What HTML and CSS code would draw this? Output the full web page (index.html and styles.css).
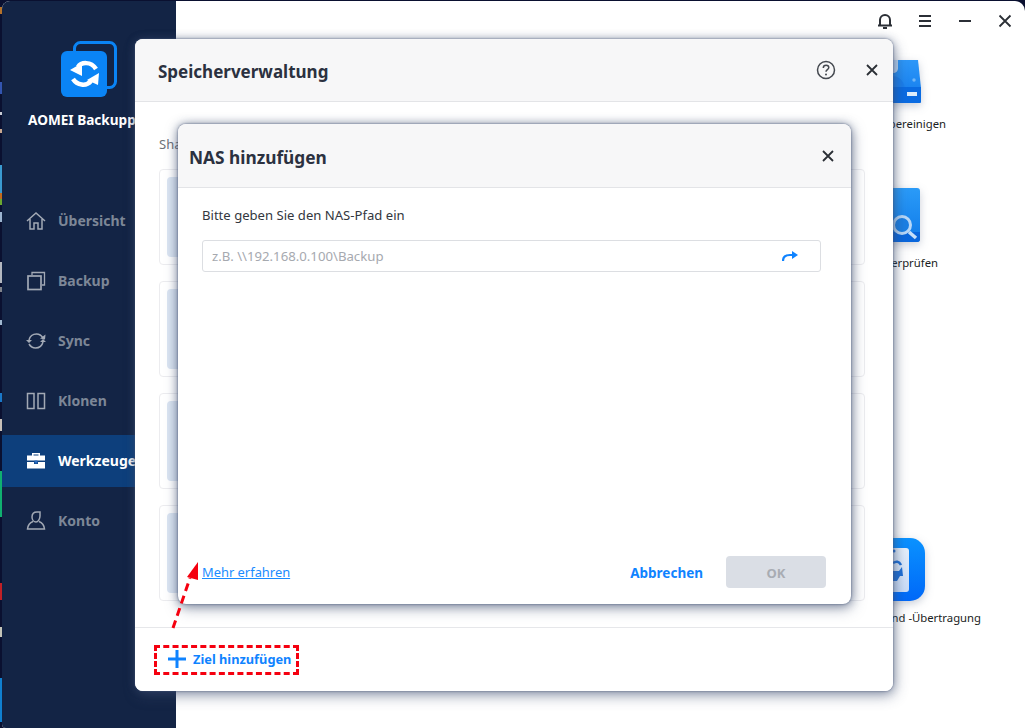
FILE: index.html
```html
<!DOCTYPE html>
<html lang="de">
<head>
<meta charset="utf-8">
<title>AOMEI Backupper</title>
<link rel="stylesheet" href="styles.css">
</head>
<body>
<div class="desk-strip"></div>
<div class="app">
  <aside class="sidebar">
    <svg class="logo" width="56" height="56" viewBox="0 0 56 56">
      <rect x="13.5" y="1.5" width="41" height="45" rx="6" fill="none" stroke="#0a84f5" stroke-width="3"/>
      <rect x="0" y="10" width="46" height="46" rx="6" fill="#0a84f5"/>
      <path d="M17 26C20 21 30 20 35 28" fill="none" stroke="#fff" stroke-width="4.500"/>
      <path d="M9 29 21 22 21 35z" fill="#fff"/>
      <path d="M12 38C16 44 25 46 30 40" fill="none" stroke="#fff" stroke-width="4.500"/>
      <path d="M38 32 37 44 26 39z" fill="#fff"/>
    </svg>
    <div class="brand">AOMEI Backupper</div>
    <nav class="nav">
      <a class="nav-item">
        <svg width="20" height="20" viewBox="0 0 20 20"><path d="M1 10 10 2l9 8M4 8v10h4v-6h4v6h4V8" fill="none" stroke="#a2a9b5" stroke-width="1.500"/></svg>
        <span>Übersicht</span>
      </a>
      <a class="nav-item">
        <svg width="20" height="20" viewBox="0 0 20 20"><path d="M6 4V1.500h12.500V14H16" fill="none" stroke="#a2a9b5" stroke-width="1.300"/><rect x="2" y="5" width="13" height="13.500" fill="none" stroke="#a2a9b5" stroke-width="1.700"/></svg>
        <span>Backup</span>
      </a>
      <a class="nav-item">
        <svg width="20" height="20" viewBox="0 0 20 20"><path d="M3 9c1-4 4-6 7.500-6 3 0 5 1.500 6.500 4M17 11c-1 4-4 6-7.500 6-3 0-5-1.500-6.500-4" fill="none" stroke="#a2a9b5" stroke-width="1.500"/><path d="M0 9h6l-3 3zM14 7.500l5 1 .5-5zM14 11h6l-3-3z" fill="#a2a9b5"/></svg>
        <span>Sync</span>
      </a>
      <a class="nav-item">
        <svg width="20" height="20" viewBox="0 0 20 20"><path d="M1.500 2.500h6.500v15H1.500zM12 2.500h6.500v15H12z" fill="none" stroke="#a2a9b5" stroke-width="1.500"/></svg>
        <span>Klonen</span>
      </a>
      <a class="nav-item active">
        <svg width="20" height="20" viewBox="0 0 20 20"><path d="M6 4.500V2h8v2.500h5v5H1v-5z" fill="#fff"/><path d="M1 11h7v2h4v-2h7v6.500H1z" fill="#fff"/><path d="M7.500 4.500V3.500h5v1z" fill="#0d3f7c"/><rect x="8.500" y="9.500" width="3" height="3" fill="#2a6cc0"/></svg>
        <span>Werkzeuge</span>
      </a>
      <a class="nav-item">
        <svg width="20" height="20" viewBox="0 0 20 20"><path d="M6 6c0-3 2-5 5-5h3v4c0 3-2 6-4 6S6 9 6 6zM7 10.500c-3 1-5 3-5.500 7.500h17c-.5-4.500-2.500-6.500-5.500-7.500" fill="none" stroke="#a2a9b5" stroke-width="1.500"/></svg>
        <span>Konto</span>
      </a>
    </nav>
  </aside>

  <main class="main">
    <header class="titlebar">
      <button class="win-btn"><svg width="16" height="16" viewBox="0 0 16 16"><path d="M1 12.500h14M3 12V7a5 5 0 0 1 10 0v5M6 15h4" fill="none" stroke="#2b2f36" stroke-width="2"/></svg></button>
      <button class="win-btn"><svg width="14" height="14" viewBox="0 0 14 14"><path d="M1 2h12M1 7h12M1 12h12" stroke="#2b2f36" stroke-width="1.800"/></svg></button>
      <button class="win-btn"><svg width="14" height="14" viewBox="0 0 14 14"><path d="M1 7h12" stroke="#2b2f36" stroke-width="1.800"/></svg></button>
      <button class="win-btn"><svg width="14" height="14" viewBox="0 0 14 14"><path d="M1.500 1.500l11 11M12.500 1.500l-11 11" stroke="#2b2f36" stroke-width="1.800"/></svg></button>
    </header>
    <section class="tools">
      <div class="tool tool-clean">
        <svg class="tool-icon" width="60" height="44" viewBox="0 0 60 44">
          <defs><linearGradient id="diskTop" x1="0" y1="0" x2="0" y2="1"><stop offset="0" stop-color="#2d97f8"/><stop offset="1" stop-color="#1b84f0"/></linearGradient></defs>
          <path d="M4 0h53l3 28H0z" fill="url(#diskTop)"/>
          <path d="M0 16h30c8 0 12 4 14 12H0z" fill="#1a7eec"/>
          <path d="M28 0h9v8c0 3-2 5-5 5h-4z" fill="#bcd8f6"/>
          <path d="M0 27h60v15a1 1 0 0 1-1 1H0z" fill="#0a6be2"/>
          <circle cx="53" cy="20" r="1.700" fill="#72b6f6"/>
          <rect x="46" y="32" width="10" height="4" fill="#dcecfb"/>
        </svg>
        <div class="tool-label">Backups bereinigen</div>
      </div>
      <div class="tool tool-check">
        <svg class="tool-icon" width="60" height="54" viewBox="0 0 60 54">
          <defs><linearGradient id="checkBg" x1="0" y1="0" x2="0" y2="1"><stop offset="0" stop-color="#2a9bf8"/><stop offset="1" stop-color="#0f7ae8"/></linearGradient></defs>
          <path d="M0 0h57a3 3 0 0 1 3 3v48a3 3 0 0 1-3 3H0z" fill="url(#checkBg)"/>
          <path d="M0 44h60v7a3 3 0 0 1-3 3H0z" fill="#0966dc"/>
          <circle cx="42" cy="37" r="8.500" fill="#1a7fe4" stroke="#b8d8f8" stroke-width="3"/>
          <path d="M49 44l7 6" stroke="#c6dff8" stroke-width="3.500"/>
        </svg>
        <div class="tool-label">Bild überprüfen</div>
      </div>
      <div class="tool tool-transfer">
        <svg class="tool-icon" width="65" height="63" viewBox="0 0 65 63">
          <defs>
            <linearGradient id="transBg" x1="0" y1="0" x2="0" y2="1"><stop offset="0" stop-color="#0a92ff"/><stop offset="1" stop-color="#0068f8"/></linearGradient>
            <linearGradient id="transCard" x1="0" y1="0" x2="0" y2="1"><stop offset="0" stop-color="#e6f0fb"/><stop offset="1" stop-color="#c9dcf8"/></linearGradient>
          </defs>
          <path d="M0 0h50a15 15 0 0 1 15 15v33a15 15 0 0 1-15 15H0z" fill="url(#transBg)"/>
          <path d="M0 10h46a3 3 0 0 1 3 3v38a3 3 0 0 1-3 3H0z" fill="url(#transCard)"/>
          <path d="M33 25c3-2 6-2 8 2" fill="none" stroke="#1e6fd8" stroke-width="2.500"/>
          <path d="M33 33h6l3-4 1 9-3 0-3 5h-4z" fill="#1e6fd8"/>
          <circle cx="34" cy="13" r="1.500" fill="#1e6fd8"/>
        </svg>
        <div class="tool-label">Kommand -Übertragung</div>
      </div>
    </section>
  </main>
</div>

<div class="dialog outer">
  <header class="dlg-head outer-head">
    <h2 class="outer-title">Speicherverwaltung</h2>
    <div class="outer-actions">
      <svg width="20" height="20" viewBox="0 0 20 20"><circle cx="10" cy="10" r="8.500" fill="none" stroke="#44484f" stroke-width="1.500"/><path d="M7.300 8c0-1.700 1.200-2.700 2.800-2.700s2.700 1 2.700 2.300c0 2.100-2.800 2-2.800 4.200" fill="none" stroke="#44484f" stroke-width="1.500"/><circle cx="10" cy="14.500" r="1" fill="#44484f"/></svg>
      <svg width="12" height="12" viewBox="0 0 12 12"><path d="M1 1l10 10M11 1L1 11" stroke="#2b2f36" stroke-width="1.800"/></svg>
    </div>
  </header>
  <div class="outer-body">
    <div class="share-label">Sha</div>
    <div class="card"><div class="card-thumb"></div></div>
    <div class="card"><div class="card-thumb"></div></div>
    <div class="card"><div class="card-thumb"></div></div>
    <div class="card"><div class="card-thumb"></div></div>
  </div>
  <footer class="outer-foot">
    <button class="add-target">
      <svg width="18" height="18" viewBox="0 0 18 18"><path d="M9 0v18M0 9h18" stroke="#0f83ff" stroke-width="3"/></svg>
      <span>Ziel hinzufügen</span>
    </button>
  </footer>

  <div class="dialog inner">
    <header class="dlg-head inner-head">
      <h2 class="inner-title">NAS hinzufügen</h2>
      <svg width="12" height="12" viewBox="0 0 12 12"><path d="M1 1l10 10M11 1L1 11" stroke="#2b2f36" stroke-width="1.800"/></svg>
    </header>
    <div class="inner-body">
      <label class="field-label">Bitte geben Sie den NAS-Pfad ein</label>
      <div class="field">
        <span class="placeholder">z.B. \\192.168.0.100\Backup</span>
        <svg width="16" height="12" viewBox="0 0 16 12"><path d="M1 11c0-4 3-6 7-6h4" fill="none" stroke="#0f83ff" stroke-width="2.200"/><path d="M10 1l6 4-6 4z" fill="#0f83ff"/></svg>
      </div>
    </div>
    <footer class="inner-foot">
      <a class="more">Mehr erfahren</a>
      <div class="inner-actions">
        <button class="btn-cancel">Abbrechen</button>
        <button class="btn-ok">OK</button>
      </div>
    </footer>
  </div>
</div>

<svg class="annot-arrow" width="40" height="80" viewBox="0 0 40 80">
  <path d="M6 70 23 20" fill="none" stroke="#f5000f" stroke-width="3" stroke-dasharray="8 5"/>
  <path d="M31 4 20 19l11 3z" fill="#f5000f"/>
</svg>
</body>
</html>
```
FILE: styles.css
```css
* { box-sizing: border-box; }
html, body { margin: 0; padding: 0; }
body {
  width: 1025px;
  height: 728px;
  overflow: hidden;
  display: flex;
  position: relative;
  background: #0a1030;
  font-family: "Noto Sans", "Open Sans", sans-serif;
  font-size: 13px;
  color: #2b2f36;
}
button { font: inherit; border: 0; background: none; padding: 0; }
h2 { margin: 0; }

.desk-strip {
  width: 2px;
  flex: none;
  background: linear-gradient(to bottom,
    #0a1030 7px, #b5722a 7px, #b5722a 14px, #0a1030 14px,
    #0a1030 82px, #3355b0 82px, #3355b0 94px, #0a1030 94px,
    #0a1030 112px, #c8ccd4 112px, #c8ccd4 115px, #0a1030 115px,
    #0a1030 129px, #c8a890 129px, #c8a890 133px, #0a1030 133px,
    #0a1030 165px, #3a9ad0 165px, #3a9ad0 193px, #c46a1c 193px, #c46a1c 199px, #6aa830 199px, #6aa830 205px, #0a1030 205px,
    #0a1030 212px, #9cb4d0 212px, #9cb4d0 222px, #0a1030 222px,
    #0a1030 262px, #b4b8c0 262px, #b4b8c0 283px, #0a1030 283px,
    #0a1030 287px, #80848c 287px, #80848c 292px, #0a1030 292px,
    #0a1030 320px, #a0b8d0 320px, #a0b8d0 325px, #0a1030 325px,
    #0a1030 393px, #1a78c8 393px, #1a78c8 402px, #0a1030 402px,
    #0a1030 419px, #c8c0b8 419px, #c8c0b8 431px, #0a1030 431px,
    #0a1030 471px, #10b070 471px, #10b070 517px, #0a1030 517px,
    #0a1030 583px, #c02026 583px, #c02026 600px, #0a1030 600px,
    #0a1030 627px, #c4c4b8 627px, #c4c4b8 637px, #0a1030 637px,
    #0a1030 678px, #1080d0 678px, #1080d0 722px, #0a1030 722px);
}

.app {
  flex: 1;
  display: flex;
  margin-top: 1px;
  border-radius: 8px 10px 0 4px;
  overflow: hidden;
  background: #fff;
}

.sidebar {
  width: 174px;
  flex: none;
  background: #132445;
  display: flex;
  flex-direction: column;
  align-items: center;
  padding-top: 40px;
}
.logo { display: block; }
.brand {
  margin-top: 12px;
  height: 22px;
  line-height: 22px;
  font-size: 13.600px;
  font-weight: 700;
  color: #fff;
  white-space: nowrap;
}
.nav {
  align-self: stretch;
  margin-top: 64px;
  display: flex;
  flex-direction: column;
  gap: 8px;
}
.nav-item {
  height: 52px;
  display: flex;
  align-items: center;
  gap: 12px;
  padding-left: 24px;
  font-size: 14px;
  font-weight: 700;
  color: #7d8797;
  white-space: nowrap;
  overflow: hidden;
}
.nav-item svg { flex: none; }
.nav-item span { margin-bottom: 2px; }
.nav-item.active { background: #0d3f7c; color: #fff; }

.main { flex: 1; display: flex; flex-direction: column; min-width: 0; }
.titlebar { height: 40px; display: flex; justify-content: flex-end; flex: none; }
.win-btn { width: 40px; height: 40px; display: flex; align-items: center; justify-content: center; }

.tools { display: flex; flex-direction: column; align-items: flex-end; padding-top: 19px; }
.tool { display: flex; flex-direction: column; align-items: flex-end; color: #1a1d22; font-size: 11.300px; line-height: 18px; }
.tool-icon { display: block; filter: drop-shadow(0 3px 4px rgba(40,60,100,.25)); }
.tool-clean { padding-right: 79px; }
.tool-clean .tool-icon { margin-right: 25px; }
.tool-clean .tool-label { margin-top: 11px; }
.tool-check { margin-top: 55px; padding-right: 87px; }
.tool-check .tool-icon { margin-right: 18px; }
.tool-check .tool-label { margin-top: 12px; }
.tool-transfer { margin-top: 266px; padding-right: 44px; }
.tool-transfer .tool-icon { margin-right: 56px; }
.tool-transfer .tool-label { margin-top: 8px; }

.dialog { position: absolute; background: #fff; display: flex; flex-direction: column; }
.outer {
  left: 135px;
  top: 39px;
  width: 758px;
  height: 652px;
  border-radius: 8px;
  box-shadow: 0 0 2px rgba(70,85,120,.9), 0 0 8px rgba(60,75,110,.45), 2px 5px 14px rgba(60,75,110,.45);
}
.dlg-head {
  flex: none;
  display: flex;
  align-items: center;
  justify-content: space-between;
  background: #f7f7f8;
  border-bottom: 1px solid #e3e4e7;
}
.outer-head { height: 63px; padding: 0 15px 1px 23px; border-radius: 8px 8px 0 0; }
.outer-title { margin-top: 4px; font-size: 17px; font-weight: 700; color: #2b3140; }
.outer-actions { display: flex; align-items: center; gap: 30px; }
.outer-body { flex: 1; padding: 0 28px 0 24px; }
.share-label { margin-top: 32px; height: 20px; line-height: 20px; font-size: 13px; color: #6d7178; }
.card {
  margin-top: 15px;
  height: 96px;
  border: 1px solid #ececef;
  border-radius: 4px;
  padding: 7px;
}
.card + .card { margin-top: 16px; }
.card-thumb { width: 60px; height: 80px; border-radius: 4px; background: #dbe5f2; }
.outer-foot {
  flex: none;
  height: 64px;
  border-top: 1px solid #e6e7ea;
  padding: 17px 0 0 19px;
  background: #fff;
  border-radius: 0 0 8px 8px;
}
.add-target {
  display: flex;
  align-items: center;
  gap: 7px;
  width: 145px;
  height: 30px;
  padding: 0 0 2px 11px;
  border: 3px dashed #f5000f;
  font-size: 12.800px;
  font-weight: 700;
  color: #0f83ff;
  white-space: nowrap;
}

.inner {
  left: 43px;
  top: 85px;
  width: 673px;
  height: 480px;
  border-radius: 8px;
  box-shadow: 0 0 2px rgba(70,85,120,.9), 0 0 8px rgba(60,75,110,.5), 1px 4px 14px rgba(60,75,110,.5);
}
.inner-head { height: 64px; padding: 0 17px 0 11px; border-radius: 8px 8px 0 0; }
.inner-title { margin-top: 4px; font-size: 17.300px; font-weight: 700; color: #2b3140; }
.inner-body { flex: 1; padding: 17px 30px 0 24px; }
.field-label { display: block; height: 20px; line-height: 20px; font-size: 13.100px; color: #33373e; }
.field {
  margin-top: 15px;
  height: 32px;
  display: flex;
  align-items: center;
  justify-content: space-between;
  padding: 0 22px 0 9px;
  border: 1px solid #dcdee2;
  border-radius: 3px;
}
.placeholder { font-size: 13.200px; color: #a6a9af; }
.inner-foot {
  flex: none;
  display: flex;
  align-items: center;
  justify-content: space-between;
  padding: 0 25px 16px 24px;
}
.more { font-size: 12.900px; color: #1a8cff; text-decoration: underline; }
.inner-actions { display: flex; align-items: center; gap: 23px; }
.btn-cancel { padding-top: 2px; font-size: 13.500px; font-weight: 700; color: #0f83ff; }
.btn-ok {
  width: 100px;
  height: 32px;
  padding-top: 2px;
  border-radius: 4px;
  background: #dadee5;
  font-size: 13px;
  font-weight: 700;
  color: #a8acb3;
}

.annot-arrow { position: absolute; left: 167px; top: 558px; }
```
